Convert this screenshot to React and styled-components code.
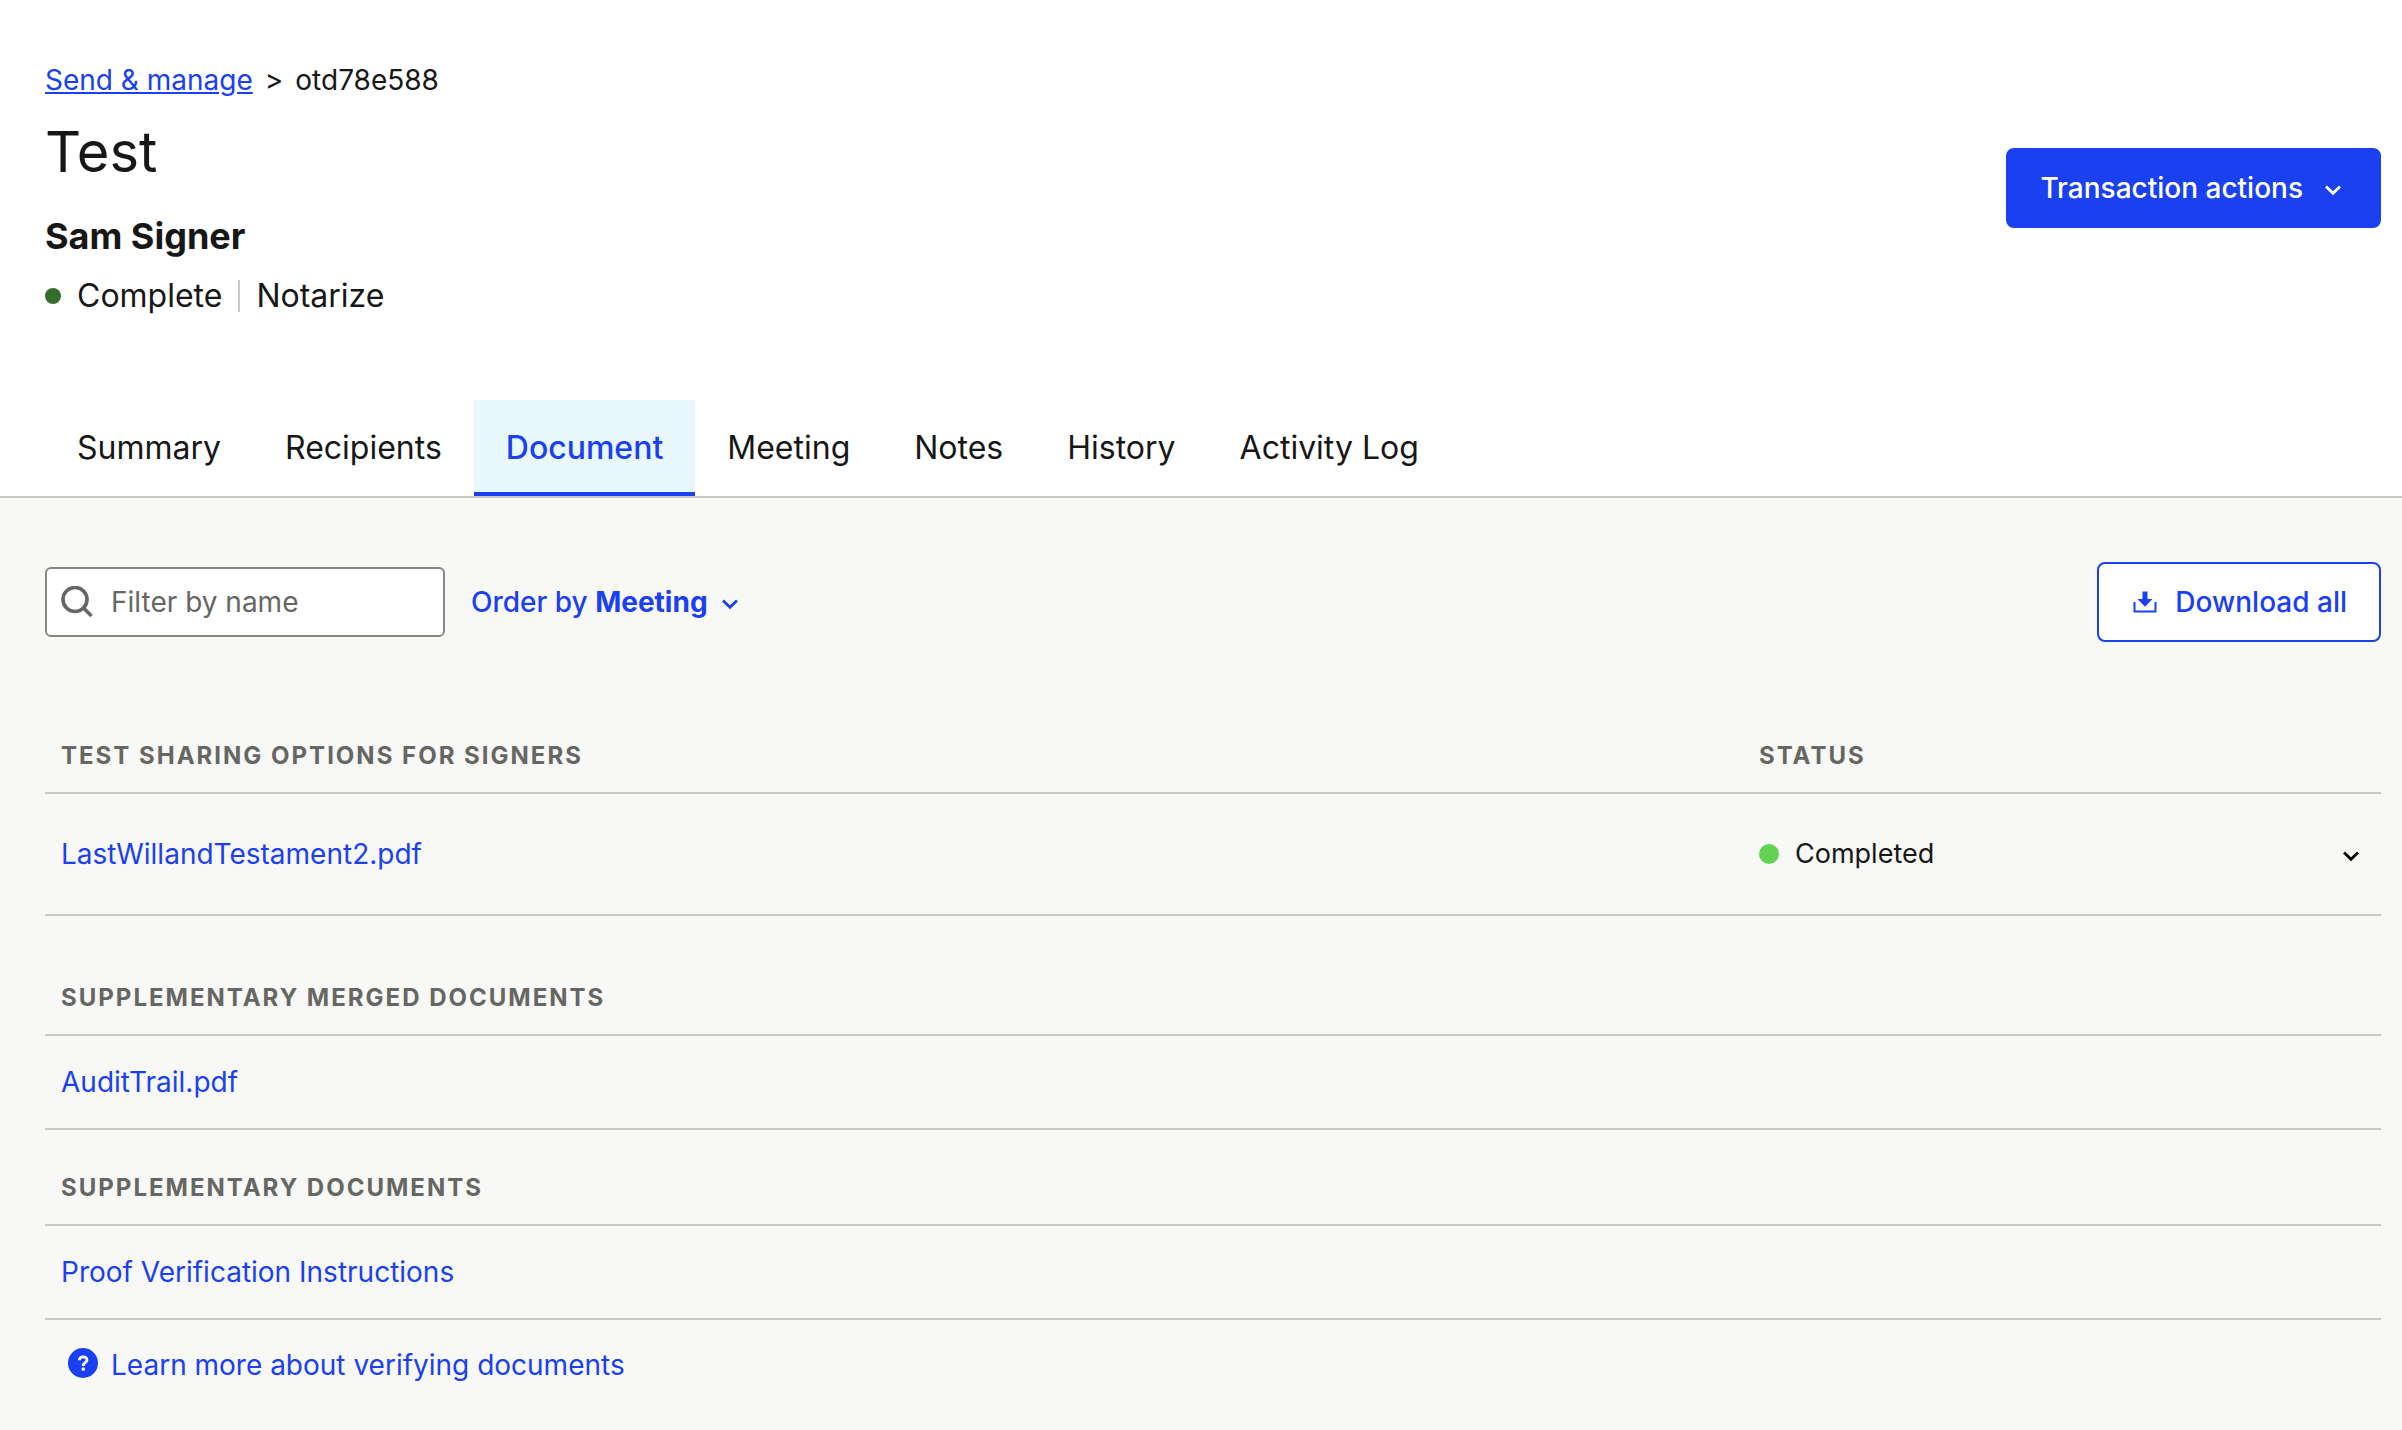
import React from "react";
import styled, { createGlobalStyle } from "styled-components";

const ink = "#171717";
const blue = "#1a40f0";
const rule = "#c8c8c4";
const muted = "#666663";

const GlobalStyle = createGlobalStyle`
  *, *::before, *::after { box-sizing: border-box; }
  body {
    margin: 0;
    background: #f8f8f7;
    color: ${ink};
    font-family: Inter, "Liberation Sans", sans-serif;
    font-size: 28px;
    line-height: 40px;
  }
  h1, h2, p { margin: 0; }
  button, input { font: inherit; }
  a { color: ${blue}; text-decoration: none; }
  svg { display: block; flex: none; }
`;

const Page = styled.div`
  min-height: 100vh;
`;

const Top = styled.div`
  background: #fff;
  border-bottom: 2px solid ${rule};
`;

const Header = styled.header`
  display: flex;
  align-items: center;
  justify-content: space-between;
  padding: 60px 21px 84px 45px;
`;

const Crumbs = styled.nav`
  display: flex;
  gap: 12px;
`;

const CrumbLink = styled.a`
  text-decoration: underline;
`;

const Title = styled.h1`
  margin-top: 20px;
  font-size: 56px;
  font-weight: 400;
  line-height: 64px;
`;

const Signer = styled.h2`
  margin-top: 30px;
  font-size: 36px;
  font-weight: 700;
  line-height: 44px;
`;

const StatusLine = styled.div`
  display: flex;
  align-items: center;
  gap: 16px;
  margin-top: 18px;
  font-size: 32px;
`;

const Dot = styled.span`
  flex: none;
  width: ${(p) => p.$size}px;
  height: ${(p) => p.$size}px;
  border-radius: 50%;
  background: ${(p) => p.$color};
`;

const Divider = styled.span`
  width: 2px;
  height: 32px;
  background: ${rule};
`;

const Button = styled.button`
  display: flex;
  align-items: center;
  gap: 16px;
  height: 80px;
  padding: 0 32px;
  border: 2px solid ${blue};
  border-radius: 8px;
  background: ${(p) => (p.$primary ? blue : "#fff")};
  color: ${(p) => (p.$primary ? "#fff" : blue)};
  font-weight: 500;
  white-space: nowrap;
`;

const Tabs = styled.nav`
  display: flex;
  padding: 0 45px;
`;

const Tab = styled.a`
  height: 96px;
  padding: 28px 32px 24px;
  border-bottom: 4px solid ${(p) => (p.$active ? blue : "transparent")};
  background: ${(p) => (p.$active ? "#e9f7fe" : "transparent")};
  color: ${(p) => (p.$active ? blue : ink)};
  font-size: 32px;
  font-weight: ${(p) => (p.$active ? 500 : 400)};
  white-space: nowrap;
`;

const Main = styled.main`
  padding: 64px 21px 40px 45px;
`;

const Toolbar = styled.div`
  display: flex;
  align-items: center;
  gap: 26px;
  margin-bottom: 98px;
`;

const Search = styled.label`
  display: flex;
  align-items: center;
  gap: 18px;
  width: 400px;
  height: 70px;
  padding: 0 14px;
  border: 2px solid #868683;
  border-radius: 6px;
  background: #fff;
  color: ${muted};
`;

const SearchInput = styled.input`
  flex: 1;
  min-width: 0;
  padding: 0;
  border: 0;
  outline: 0;
  background: transparent;
  color: ${ink};
  &::placeholder { color: ${muted}; opacity: 1; }
`;

const OrderButton = styled.button`
  display: flex;
  align-items: center;
  gap: 8px;
  margin-right: auto;
  padding: 0;
  border: 0;
  background: none;
  color: ${blue};
  font-weight: 500;
`;

const Table = styled.table`
  width: 100%;
  margin-top: ${(p) => p.$gap}px;
  border-collapse: separate;
  border-spacing: 0;
  table-layout: fixed;
`;

const HeadCell = styled.th`
  width: ${(p) => p.$width || "auto"};
  padding: 0 16px 20px;
  border-bottom: 2px solid ${rule};
  color: ${muted};
  font-size: 24px;
  font-weight: 700;
  letter-spacing: 2px;
  line-height: 32px;
  text-align: left;
  text-transform: uppercase;
`;

const Cell = styled.td`
  height: ${(p) => (p.$tall ? 122 : 94)}px;
  padding: 0 16px;
  border-bottom: 2px solid ${rule};
`;

const StatusCell = styled.div`
  display: flex;
  align-items: center;
  gap: 16px;
  font-size: 27px;
`;

const IconButton = styled.button`
  margin-left: auto;
  padding: 0;
  border: 0;
  background: none;
  color: #000;
`;

const HelpLink = styled.a`
  display: inline-flex;
  align-items: flex-start;
  gap: 12px;
  margin: 25px 0 0 23px;
`;

const Chevron = () => (
  <svg width="28" height="28" viewBox="0 0 28 28" fill="none" stroke="currentColor" strokeWidth="2.800" aria-hidden="true">
    <path d="M7 12.500 14 19.200 21 12.500" />
  </svg>
);

const SearchIcon = () => (
  <svg width="32" height="32" viewBox="0 0 32 32" fill="none" stroke="currentColor" strokeWidth="3.600" aria-hidden="true">
    <circle cx="14" cy="13.500" r="12" />
    <path d="m22 21.500 8.500 8.500" />
  </svg>
);

const DownloadIcon = () => (
  <svg width="28" height="28" viewBox="0 0 28 28" aria-hidden="true">
    <path d="M11.500 3.500h5V11h5l-7.500 7.700L6.500 11h5z" fill="currentColor" />
    <path d="M3.500 14v9.500h21V14" fill="none" stroke="currentColor" strokeWidth="2" />
  </svg>
);

const HelpIcon = () => (
  <svg width="31" height="36" viewBox="0 0 31 36" aria-hidden="true">
    <circle cx="15" cy="18" r="15" fill={blue} />
    <path d="M11.300 15.200c.2-4.500 7.700-4.500 7.700-.3 0 3-3.800 2.700-3.800 6" fill="none" stroke="#fff" strokeWidth="2.800" />
    <rect x="13.600" y="22.600" width="3.200" height="3.200" rx="1" fill="#fff" />
  </svg>
);

const tabs = ["Summary", "Recipients", "Document", "Meeting", "Notes", "History", "Activity Log"];

const supplements = [
  { heading: "Supplementary merged documents", file: "AuditTrail.pdf", gap: 66 },
  { heading: "Supplementary documents", file: "Proof Verification Instructions", gap: 42 },
];

export default function App() {
  return (
    <Page>
      <GlobalStyle />
      <Top>
        <Header>
          <div>
            <Crumbs aria-label="Breadcrumb">
              <CrumbLink href="#manage">Send &amp; manage</CrumbLink>
              <span>&gt;</span>
              <span>otd78e588</span>
            </Crumbs>
            <Title>Test</Title>
            <Signer>Sam Signer</Signer>
            <StatusLine>
              <Dot $size={16} $color="#356d2b" />
              <span>Complete</span>
              <Divider />
              <span>Notarize</span>
            </StatusLine>
          </div>
          <Button $primary type="button">
            Transaction actions
            <Chevron />
          </Button>
        </Header>
        <Tabs aria-label="Transaction sections">
          {tabs.map((name) => (
            <Tab key={name} href={`#${name}`} $active={name === "Document"} aria-current={name === "Document" ? "page" : undefined}>
              {name}
            </Tab>
          ))}
        </Tabs>
      </Top>
      <Main>
        <Toolbar>
          <Search htmlFor="filter">
            <SearchIcon />
            <SearchInput id="filter" type="text" placeholder="Filter by name" aria-label="Filter by name" />
          </Search>
          <OrderButton type="button">
            <span>
              Order by <b>Meeting</b>
            </span>
            <Chevron />
          </OrderButton>
          <Button type="button">
            <DownloadIcon />
            Download all
          </Button>
        </Toolbar>
        <Table $gap={0}>
          <thead>
            <tr>
              <HeadCell scope="col">Test sharing options for signers</HeadCell>
              <HeadCell scope="col" $width="638px">Status</HeadCell>
            </tr>
          </thead>
          <tbody>
            <tr>
              <Cell $tall>
                <a href="#will">LastWillandTestament2.pdf</a>
              </Cell>
              <Cell $tall>
                <StatusCell>
                  <Dot $size={20} $color="#62d251" />
                  Completed
                  <IconButton type="button" aria-label="Document options">
                    <Chevron />
                  </IconButton>
                </StatusCell>
              </Cell>
            </tr>
          </tbody>
        </Table>
        {supplements.map((s) => (
          <Table key={s.heading} $gap={s.gap}>
            <thead>
              <tr>
                <HeadCell scope="col">{s.heading}</HeadCell>
              </tr>
            </thead>
            <tbody>
              <tr>
                <Cell>
                  <a href={`#${s.file.split(/[ .]/)[0]}`}>{s.file}</a>
                </Cell>
              </tr>
            </tbody>
          </Table>
        ))}
        <HelpLink href="#verify">
          <HelpIcon />
          Learn more about verifying documents
        </HelpLink>
      </Main>
    </Page>
  );
}
